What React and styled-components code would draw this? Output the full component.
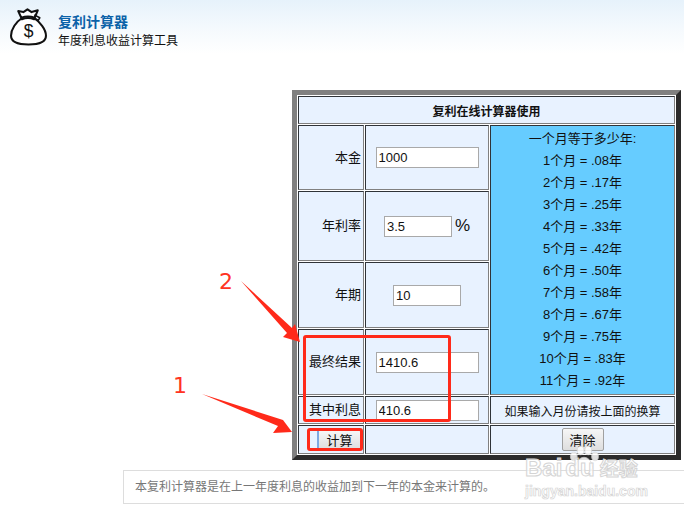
import React from "react";
import styled, { createGlobalStyle } from "styled-components";

const rates = [
  ["1", ".08"],
  ["2", ".17"],
  ["3", ".25"],
  ["4", ".33"],
  ["5", ".42"],
  ["6", ".50"],
  ["7", ".58"],
  ["8", ".67"],
  ["9", ".75"],
  ["10", ".83"],
  ["11", ".92"],
];

const App = () => {
  return (
    <Page>
      <GlobalStyle />
      <Header>
        <BagIcon />
        <HeaderText>
          <HeaderTitle>复利计算器</HeaderTitle>
          <HeaderSub>年度利息收益计算工具</HeaderSub>
        </HeaderText>
      </Header>

      <Main>
        <CalcTable>
          <colgroup>
            <col width="66" />
            <col width="124" />
            <col width="185" />
          </colgroup>
          <tbody>
            <tr>
              <TitleCell colSpan={3} $h={28}>
                复利在线计算器使用
              </TitleCell>
            </tr>
            <tr>
              <LabelCell $h={65}>本金</LabelCell>
              <InputCell>
                <NumInput defaultValue="1000" />
              </InputCell>
              <RateCell rowSpan={4}>
                <RateLine>一个月等于多少年:</RateLine>
                {rates.map(([m, y]) => (
                  <RateLine key={m}>
                    {m}个月 = {y}年
                  </RateLine>
                ))}
              </RateCell>
            </tr>
            <tr>
              <LabelCell $h={70}>年利率</LabelCell>
              <InputCell>
                <NumInput $short defaultValue="3.5" />
                <Percent>%</Percent>
              </InputCell>
            </tr>
            <tr>
              <LabelCell $h={66}>年期</LabelCell>
              <InputCell>
                <NumInput $short defaultValue="10" />
              </InputCell>
            </tr>
            <tr>
              <LabelCell $h={66}>最终结果</LabelCell>
              <InputCell>
                <NumInput defaultValue="1410.6" />
              </InputCell>
            </tr>
            <tr>
              <LabelCell $h={28}>其中利息</LabelCell>
              <InputCell>
                <NumInput defaultValue="410.6" />
              </InputCell>
              <HintCell>如果输入月份请按上面的换算</HintCell>
            </tr>
            <tr>
              <ButtonCell>
                <CalcButton>计算</CalcButton>
              </ButtonCell>
              <InputCell />
              <HintCell>
                <ClearButton>清除</ClearButton>
              </HintCell>
            </tr>
          </tbody>
        </CalcTable>
      </Main>

      <Note>本复利计算器是在上一年度利息的收益加到下一年的本金来计算的。</Note>

      <ArrowOne />
      <ArrowTwo />
      <Digit $x={173} $y={373}>1</Digit>
      <Digit $x={219} $y={269}>2</Digit>
      <RedBox $x={303} $y={335} $w={148} $h={87} />
      <RedBox $x={307} $y={428} $w={56} $h={23} />

      <Watermark>
        <Paw />
        <MarkRow>
          <MarkLogo>Bai</MarkLogo>
          <MarkLogo $gap>du</MarkLogo>
          <MarkCn>经验</MarkCn>
        </MarkRow>
        <MarkUrl>jingyan.baidu.com</MarkUrl>
      </Watermark>
    </Page>
  );
};

const BagIcon = () => (
  <BagSvg viewBox="0 0 36 36" fill="none" stroke="#111" strokeWidth="2" strokeLinejoin="round" strokeLinecap="round">
    <path d="M12 9C6 13 1 20 1 26.500C1 33 8 35 18 35C28 35 35 33 35 26.500C35 20 29 13 23 9" fill="#fff" />
    <path d="M11 9L8 2.500L13 3.500L17 0.800L21 3.500L27 1.800L24 9C20 7.500 15 7.500 11 9Z" fill="#fff" />
    <path d="M11.500 10.500C15 9 20 9 23.500 10.500" />
    <path d="M24 6.500L29 9L27.500 11.500L24 9.500" strokeWidth="1.500" />
    <text x="18" y="28" textAnchor="middle" fontSize="17" fontFamily="Liberation Sans, sans-serif" fill="#111" stroke="none">
      $
    </text>
  </BagSvg>
);

const ArrowOne = () => (
  <ArrowSvg viewBox="0 0 684 512">
    <polygon points="202,394 283,420 280,416 292,432 273,433 278,426" fill="#ff2a1a" />
  </ArrowSvg>
);

const ArrowTwo = () => (
  <ArrowSvg viewBox="0 0 684 512">
    <polygon points="241,281 292,328 295,324 300,342 283,337 287,333" fill="#ff2a1a" />
  </ArrowSvg>
);

const Paw = () => (
  <PawSvg viewBox="0 0 40 30" fill="#fff" stroke="#d8d8d8">
    <ellipse cx="8" cy="12" rx="4" ry="5" />
    <ellipse cx="16" cy="5" rx="4" ry="5" />
    <ellipse cx="25" cy="5" rx="4" ry="5" />
    <ellipse cx="33" cy="12" rx="4" ry="5" />
    <path d="M20 13C14 13 10 20 10 25C10 29 16 29 20 28C24 29 30 29 30 25C30 20 26 13 20 13Z" />
  </PawSvg>
);

const GlobalStyle = createGlobalStyle`
  html,
  body {
    margin: 0;
    padding: 0;
    background: #fff;
  }

  body {
    font-family: "Liberation Sans", "Noto Sans CJK SC", sans-serif;
    color: #111;
  }
`;

const Page = styled.div`
  position: relative;
  width: 684px;
  height: 512px;
  overflow: hidden;
  background: #fff;
`;

const Header = styled.header`
  display: flex;
  align-items: flex-start;
  gap: 11px;
  height: 60px;
  box-sizing: border-box;
  padding: 8px 0 0 10px;
  background: linear-gradient(180deg, #e6f2fb 0%, #f4f9fd 45%, #fff 90%);
`;

const BagSvg = styled.svg`
  width: 37px;
  height: 38px;
  flex: none;
`;

const HeaderText = styled.div`
  display: flex;
  flex-direction: column;
  gap: 2px;
  padding-top: 5px;
`;

const HeaderTitle = styled.div`
  font-size: 14px;
  line-height: 18px;
  font-weight: bold;
  color: #0b62a8;
`;

const HeaderSub = styled.div`
  font-size: 12px;
  line-height: 16px;
  color: #111;
`;

const Main = styled.main`
  padding: 30px 0 0 292px;
`;

const CalcTable = styled.table`
  width: 389px;
  height: 370px;
  box-sizing: border-box;
  table-layout: fixed;
  border-collapse: separate;
  border-spacing: 1px;
  border-width: 5px;
  border-style: solid;
  border-color: #808080 #2b2b2b #2b2b2b #808080;
  background: #fff;
`;

const Cell = styled.td`
  box-sizing: border-box;
  padding: 0;
  border-width: 1px;
  border-style: solid;
  border-color: #2f3338 #808080 #808080 #2f3338;
  background: #e8f2ff;
  font-size: 13px;
  vertical-align: middle;
`;

const TitleCell = styled(Cell)`
  height: ${(p) => p.$h}px;
  text-align: center;
  font-size: 12px;
  font-weight: bold;
`;

const LabelCell = styled(Cell)`
  height: ${(p) => p.$h}px;
  padding: 0 2px 3px 0;
  text-align: right;
`;

const ButtonCell = styled(Cell)`
  height: 29px;
  padding-right: 2px;
  text-align: right;
`;

const InputCell = styled(Cell)`
  text-align: center;
  white-space: nowrap;
`;

const RateCell = styled(Cell)`
  padding-bottom: 1px;
  background: #66ccff;
  text-align: center;
`;

const RateLine = styled.div`
  height: 22px;
  line-height: 22px;
`;

const HintCell = styled(Cell)`
  text-align: center;
  font-size: 12px;
`;

const NumInput = styled.input`
  width: ${(p) => (p.$short ? 68 : 103)}px;
  height: 21px;
  box-sizing: border-box;
  margin: 0;
  padding: 0 2px;
  border: 1px solid #a9a9a9;
  background: #fff;
  color: #111;
  font-family: "Liberation Sans", sans-serif;
  font-size: 13px;
  vertical-align: middle;
`;

const Percent = styled.span`
  margin-left: 3px;
  font-size: 17px;
  vertical-align: middle;
`;

const CalcButton = styled.button`
  width: 44px;
  height: 20px;
  padding: 0;
  margin: 0;
  border: 1px solid #b0b0b0;
  border-left: 2px solid #7fa8e0;
  border-radius: 0 2px 2px 0;
  background: linear-gradient(180deg, #f6f6f6, #dedede);
  color: #111;
  font-family: "Noto Sans CJK SC", sans-serif;
  font-size: 13px;
  line-height: 18px;
  vertical-align: middle;
`;

const ClearButton = styled.button`
  width: 42px;
  height: 23px;
  padding: 0;
  margin: 0;
  border: 1px solid #a0a0a0;
  border-radius: 2px;
  background: linear-gradient(180deg, #f6f6f6, #dedede);
  color: #111;
  font-family: "Noto Sans CJK SC", sans-serif;
  font-size: 13px;
  vertical-align: middle;
`;

const Note = styled.div`
  box-sizing: border-box;
  width: 600px;
  height: 34px;
  margin: 10px 0 0 123px;
  padding-left: 11px;
  border: 1px solid #ddd;
  color: #777;
  font-size: 12px;
  line-height: 32px;
`;

const ArrowSvg = styled.svg`
  position: absolute;
  top: 0;
  left: 0;
  width: 684px;
  height: 512px;
  pointer-events: none;
`;

const Digit = styled.div`
  position: absolute;
  top: ${(p) => p.$y}px;
  left: ${(p) => p.$x}px;
  color: #ff3322;
  font-family: "DejaVu Sans", sans-serif;
  font-size: 22px;
  line-height: 26px;
`;

const RedBox = styled.div`
  position: absolute;
  top: ${(p) => p.$y}px;
  left: ${(p) => p.$x}px;
  width: ${(p) => p.$w}px;
  height: ${(p) => p.$h}px;
  box-sizing: border-box;
  border: 3px solid #ff2a1a;
  border-radius: 3px;
`;

const Watermark = styled.div`
  position: absolute;
  top: 443px;
  left: 525px;
  width: 124px;
  pointer-events: none;
`;

const PawSvg = styled.svg`
  position: absolute;
  top: 2px;
  left: 42px;
  width: 34px;
  height: 28px;
  opacity: 0.85;
`;

const MarkRow = styled.div`
  position: relative;
  display: flex;
  align-items: center;
  height: 26px;
  margin-top: 12px;
  white-space: nowrap;
`;

const MarkLogo = styled.span`
  flex: none;
  margin-left: ${(p) => (p.$gap ? "3px" : "0")};
  color: rgba(255, 255, 255, 0.7);
  -webkit-text-stroke: 1px #d4d4d4;
  font-size: 24px;
  font-weight: bold;
  line-height: 26px;
`;

const MarkCn = styled.span`
  flex: none;
  margin-left: 5px;
  color: rgba(255, 255, 255, 0.7);
  -webkit-text-stroke: 1px #d4d4d4;
  font-family: "Noto Sans CJK SC", sans-serif;
  font-size: 19px;
  font-weight: bold;
  line-height: 26px;
`;

const MarkUrl = styled.div`
  margin-top: 2px;
  color: rgba(255, 255, 255, 0.7);
  -webkit-text-stroke: 0.7px #d4d4d4;
  font-size: 14px;
  font-weight: bold;
  line-height: 16px;
  white-space: nowrap;
`;

export default App;
